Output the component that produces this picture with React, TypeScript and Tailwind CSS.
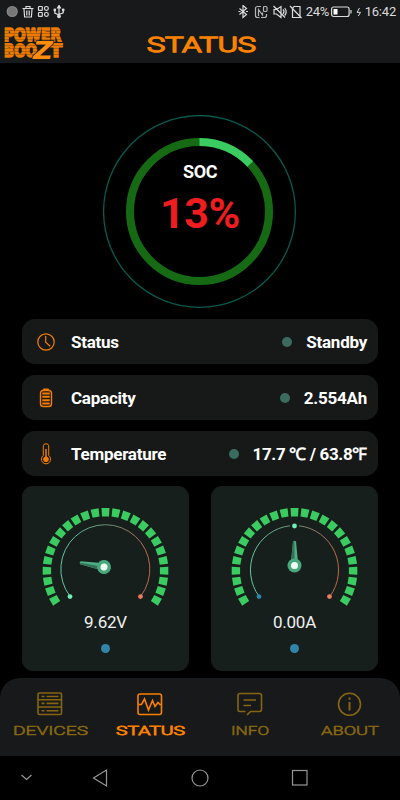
import React from "react";

type LabelProps = {
  text: string;
  width: number;
  size: number;
  height: number;
  className?: string;
  stroke?: number;
};

/* Extended techno lettering: real text stretched to the given width. */
function WideLabel({ text, width, size, height, className = "", stroke = 0 }: LabelProps) {
  return (
    <svg width={width} height={height} className={`block overflow-visible font-[Roboto,sans-serif] font-light ${className}`}>
      <text
        x="0"
        y={height}
        fontSize={size}
        textLength={width}
        lengthAdjust="spacingAndGlyphs"
        fill="currentColor"
        stroke="currentColor"
        strokeWidth={stroke}
        strokeLinejoin="miter"
      >
        {text}
      </text>
    </svg>
  );
}

function Logo() {
  return (
    <svg width="62" height="36" viewBox="0 0 62 36" className="block overflow-visible">
      <defs>
        <pattern id="stripes" width="4" height="3" patternUnits="userSpaceOnUse">
          <rect width="4" height="3" fill="#ee7b00" />
          <rect width="4" height="1" fill="#b86305" />
        </pattern>
      </defs>
      <g fontFamily="DejaVu Sans, sans-serif" fontWeight="700" fill="url(#stripes)" stroke="url(#stripes)" strokeWidth="1.800">
        <text x="2" y="14" fontSize="17" textLength="57" lengthAdjust="spacingAndGlyphs">POWER</text>
        <text x="2" y="29.500" fontSize="17" textLength="33" lengthAdjust="spacingAndGlyphs">BOO</text>
        <text x="48" y="29.500" fontSize="17" textLength="12" lengthAdjust="spacingAndGlyphs">T</text>
      </g>
      <text x="31" y="32" fontFamily="DejaVu Sans, sans-serif" fontStyle="italic" fontWeight="700" fontSize="24" textLength="20" lengthAdjust="spacingAndGlyphs" fill="#ff8c0a" stroke="#17191a" strokeWidth="1.400" paintOrder="stroke">Z</text>
    </svg>
  );
}

function StatusBar() {
  return (
    <div className="flex h-[23px] items-center justify-between pl-[6px] pr-[4px] text-[#dcdcdc]">
      <svg width="60" height="14" viewBox="0 0 60 14" fill="none" stroke="currentColor" strokeWidth="1.2">
        <circle cx="6.2" cy="6.500" r="5" fill="#777" stroke="#888" />
        <path d="M16.5 3.500h11M20 3.500V1.500h4v2M18 4l.6 8h6.800l.6-8M20.800 5.500v5M23.200 5.500v5" />
        <rect x="32.500" y="1.500" width="3.800" height="3.800" rx=".6" />
        <rect x="38.500" y="1.500" width="3.800" height="3.800" rx="1.800" />
        <rect x="32.500" y="7.500" width="3.800" height="3.800" rx=".6" />
        <rect x="38.500" y="7.500" width="3.800" height="3.800" rx="1.800" />
        <path d="M53 1.500V11M48.800 5v3l4.200 2M57.200 5v2.800L53 9.500" />
        <path d="M51.500 3 53 .5 54.500 3z" fill="currentColor" />
        <circle cx="53" cy="11.300" r="1.300" fill="currentColor" />
        <circle cx="48.800" cy="5" r=".8" fill="currentColor" />
        <circle cx="57.200" cy="5" r=".8" fill="currentColor" />
      </svg>
      <div className="flex items-center">
        <svg width="68" height="14" viewBox="0 0 68 14" fill="none" stroke="currentColor" strokeWidth="1.2">
          <path d="M1.500 3.500 8.500 9.500 5 12.500V.5l3.500 3L1.500 9.500" />
          <path d="M.5 6.500h2M8 6.500h2" />
          <path d="M23 1.500h-3.500q-2 0-2 2v7q0 2 2 2h2M20.500 11V4.500l4 5.500V7.500M28.500 9v1.500q0 2-2 2H23" stroke="#b4b4b4" />
          <rect x="25.500" y="1.500" width="3.500" height="5" rx="1" stroke="#b4b4b4" />
          <path d="M36 4.500h2.500L43 1.500v11L38.500 9H36zM35.500 1l11.500 11.500M45 4.500q2 2.200 0 4.500M46.700 3q3 3.800 0 7.500" />
          <path d="M56 1.500h6v11h-7.500V3.500zM52 1l11.500 12" />
        </svg>
        <span className="w-[24px] font-[Roboto,sans-serif] text-[13px] leading-none tracking-[-0.3px]">24%</span>
        <svg width="34" height="12" viewBox="0 0 34 12" className="ml-[1px]" fill="none">
          <rect x=".6" y="1" width="17.500" height="9.500" rx="2" stroke="#dcdcdc" strokeWidth="1.200" />
          <rect x="2.500" y="3" width="4" height="5.500" fill="#fff" />
          <path d="M20 4v3.500" stroke="#dcdcdc" strokeWidth="1.200" />
          <path d="M28.500 2 26 6.300h3.500L27.300 10" stroke="#dcdcdc" />
        </svg>
        <span className="font-[Roboto,sans-serif] text-[13px] leading-none tracking-[-0.2px]">16:42</span>
      </div>
    </div>
  );
}

function SocDial() {
  return (
    <div className="relative mx-auto mt-[51px] size-[194px]">
      <svg width="194" height="194" viewBox="0 0 194 194" fill="none">
        <circle cx="96.500" cy="96.500" r="95.900" stroke="#075a4e" strokeWidth="1.300" />
        <circle cx="96.500" cy="96.500" r="69.500" stroke="#176a14" strokeWidth="8" />
        <path d="M96.500 27A69.500 69.500 0 0 1 147.200 49" stroke="#3acb61" strokeWidth="8" />
      </svg>
      <div className="absolute inset-0 flex flex-col items-center pt-[46px] font-[Roboto,sans-serif]">
        <span className="text-[18px] font-bold leading-[22px] tracking-[-0.4px] text-white">SOC</span>
        <span className="mt-[7px] text-[43px] font-bold leading-[46px] tracking-[-0.4px] text-[#ef1d20]">13%</span>
      </div>
    </div>
  );
}

function ClockIcon() {
  return (
    <svg width="18" height="18" viewBox="0 0 18 18" fill="none" stroke="#f27d00" strokeWidth="1.200">
      <circle cx="9" cy="9" r="8.200" />
      <path d="M8.700 3v6.300l4.500 3.900" />
    </svg>
  );
}

function BatteryIcon() {
  return (
    <svg width="18" height="20" viewBox="0 0 18 20" fill="none" stroke="#f27d00" strokeWidth="1.400">
      <rect x="3.500" y="2.500" width="11" height="16" rx="2.800" />
      <path d="M6 2.500 7 1.200h4l1 1.300" />
      <path d="M5.300 5.500h7.400M5.300 8.800h7.400M5.300 12.200h7.400M5.300 15.500h7.400" strokeWidth="1.900" />
    </svg>
  );
}

function ThermometerIcon() {
  return (
    <svg width="18" height="22" viewBox="0 0 18 22" fill="none" stroke="#f27d00">
      <path d="M6.300 12.500V2.700Q6.300.8 9 .8t2.700 1.900v9.800a4.600 4.600 0 1 1-5.400 0z" />
      <path d="M9 6v9" strokeWidth="1.500" />
      <circle cx="9" cy="16.300" r="2.400" fill="#f27d00" />
    </svg>
  );
}

function InfoRow({ icon, label, value, tight }: { icon: React.ReactNode; label: string; value: string; tight?: boolean }) {
  return (
    <div className="flex h-[45px] items-center rounded-[13px] bg-[#171918] pl-[15px] pr-[11px] font-[Roboto,sans-serif] text-[17px] font-bold tracking-[-0.25px] text-white">
      {icon}
      <span className="ml-[16px] pt-[2px]">{label}</span>
      <i className="ml-auto mr-[14px] size-[10px] rounded-full bg-[#3b6b5e]" />
      <span className={`pt-[2px] ${tight ? "tracking-[-0.35px]" : ""}`}>{value}</span>
    </div>
  );
}

function Gauge({ id, value, angle, centered }: { id: string; value: string; angle: number; centered?: boolean }) {
  const ticks = Array.from({ length: 25 }, (_, i) => -120 + i * 10);
  const hubX = centered ? 83.500 : 82;
  const hubY = centered ? 79.500 : 81;
  return (
    <div className="flex h-[185px] w-[167px] flex-col items-center rounded-[11px] bg-[#171f1d]">
      <svg width="167" height="124" viewBox="0 0 167 124" fill="none">
        <defs>
          <linearGradient id={id} x1="38" x2="128" y1="0" y2="0" gradientUnits="userSpaceOnUse">
            <stop stopColor="#60caa0" />
            <stop offset=".5" stopColor="#659078" />
            <stop offset="1" stopColor="#bd6748" />
          </linearGradient>
        </defs>
        {ticks.map((a) => (
          <path key={a} d="M79.500 22h8l-.5 8.400h-7z" fill="#3acb61" transform={`rotate(${a} 83.500 84.800)`} />
        ))}
        {centered ? (
          <path d="M48.200 110.500A44.500 44.500 0 0 1 79 39.800M88 39.800A44.500 44.500 0 0 1 118.800 110.500" stroke={`url(#${id})`} />
        ) : (
          <path d="M48.200 110.500A44.500 44.500 0 1 1 118.500 110.500" stroke={`url(#${id})`} />
        )}
        <circle cx="48" cy="110.600" r="2.400" fill={centered ? "#3185a7" : "#71eeb8"} />
        <circle cx="118.500" cy="110.600" r="2.400" fill="#ed7b60" />
        {centered && <circle cx="83.500" cy="40" r="2.400" fill="#71eeb8" />}
        <g transform={`translate(${hubX} ${hubY}) rotate(${angle})`}>
          <path d="M-3.800 0-1.500-24q1.500-1.500 3 0L3.800 0z" fill="#4cae84" />
          <path d="M-3.800 0-1.500-24H0V0z" fill="#347258" />
          <circle r="7" fill="#48a87c" />
          <circle r="3.500" fill="#f0fff6" />
        </g>
      </svg>
      <span className="font-[Roboto,sans-serif] text-[17px] leading-[24px] tracking-[-0.2px] text-[#f0f0f0]">{value}</span>
      <i className="mt-[10px] size-[9px] rounded-full bg-[#3185a7]" />
    </div>
  );
}

function DevicesIcon() {
  return (
    <svg width="26" height="24" viewBox="0 0 26 24" fill="none" stroke="currentColor" strokeWidth="1.600">
      <rect x="1" y="1" width="23.500" height="21.500" rx="1.500" />
      <path d="M1 7.800h23.500M1 15h23.500" />
      <path d="M4.500 4.500h3M9.500 4.500h12M4.500 11.400h3M9.500 11.400h12M4.500 18.800h3M9.500 18.800h12" />
    </svg>
  );
}

function WaveIcon() {
  return (
    <svg width="26" height="24" viewBox="0 0 26 24" fill="none" stroke="currentColor" strokeWidth="1.600">
      <rect x="1" y="2" width="23.500" height="20.500" rx="2" />
      <path d="M1.500 12.500h3l3-5.500 4 11 4-9.500 2.500 6 3-4 2 2h1.500" />
    </svg>
  );
}

function InfoIcon() {
  return (
    <svg width="26" height="24" viewBox="0 0 26 24" fill="none" stroke="currentColor" strokeWidth="1.600">
      <path d="M8.500 19.500H3q-2 0-2-2V3.500q0-2 2-2h19.500q2 0 2 2v14q0 2-2 2h-9L10 23" />
      <path d="M6.500 8h12.500M6.500 13.500h7.500" />
    </svg>
  );
}

function AboutIcon() {
  return (
    <svg width="26" height="24" viewBox="0 0 26 24" fill="none" stroke="currentColor" strokeWidth="1.600">
      <circle cx="12.500" cy="12.300" r="11" />
      <path d="M12.500 10v8.500M12.500 5.500v2.200" strokeWidth="2" />
    </svg>
  );
}

function Tab({ icon, label, width, active }: { icon: React.ReactNode; label: string; width: number; active?: boolean }) {
  return (
    <div className={`flex w-[100px] flex-col items-center pt-[14px] ${active ? "text-[#fa8000]" : "text-[#866610]"}`}>
      {icon}
      <WideLabel text={label} width={width} size={13.500} height={10} className="mt-[9px]" stroke={active ? 0.900 : 0.600} />
    </div>
  );
}

export default function App() {
  return (
    <div className="flex h-[800px] w-[400px] flex-col overflow-hidden bg-black">
      <header className="h-[63px] shrink-0 bg-[#17191a]">
        <StatusBar />
        <div className="flex items-start">
          <div className="ml-[2px] mt-[4px] w-[62px]">
            <Logo />
          </div>
          <WideLabel text="STATUS" width={109} size={20} height={14} stroke={1.400} className="ml-[83px] mt-[14.500px] text-[#fa8200]" />
        </div>
      </header>
      <div className="mt-[1px]">
        <SocDial />
      </div>
      <section className="mx-[22px] mt-[10px] flex flex-col gap-[11px]">
        <InfoRow icon={<ClockIcon />} label="Status" value="Standby" />
        <InfoRow icon={<BatteryIcon />} label="Capacity" value="2.554Ah" />
        <InfoRow icon={<ThermometerIcon />} label="Temperature" value="17.7 ℃ / 63.8℉" tight />
      </section>
      <section className="mx-[22px] mt-[10px] flex justify-between">
        <Gauge id="voltage" value="9.62V" angle={-80} />
        <Gauge id="current" value="0.00A" angle={0} centered />
      </section>
      <nav className="mt-auto flex h-[78px] shrink-0 rounded-t-[20px] bg-[#17191a]">
        <Tab icon={<DevicesIcon />} label="DEVICES" width={75} />
        <Tab icon={<WaveIcon />} label="STATUS" width={69} active />
        <Tab icon={<InfoIcon />} label="INFO" width={38} />
        <Tab icon={<AboutIcon />} label="ABOUT" width={58} />
      </nav>
      <div className="h-[44px] shrink-0">
        <svg width="400" height="44" viewBox="0 0 400 44" fill="none" stroke="#969696" strokeWidth="1.200">
          <path d="m21.500 19 5 4.500 5-4.500M93.500 22l13-8v16z" />
          <circle cx="200" cy="22" r="8" />
          <rect x="292.500" y="14.500" width="14.500" height="14.500" />
        </svg>
      </div>
    </div>
  );
}
